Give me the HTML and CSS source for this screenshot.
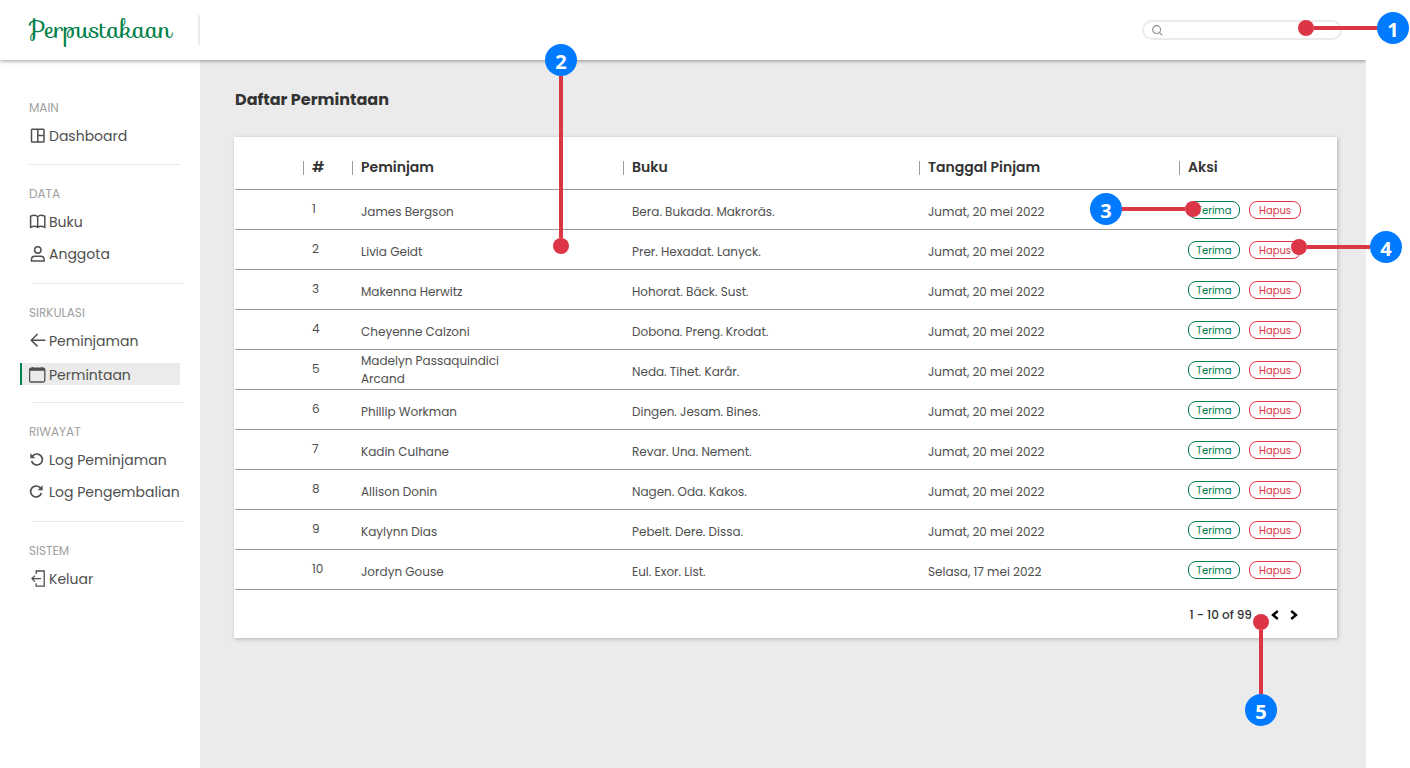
FILE: index.html
```html
<!DOCTYPE html>
<html lang="id">
<head>
<meta charset="utf-8">
<title>Perpustakaan</title>
<link rel="stylesheet" href="styles.css">
</head>
<body>
<div class="app">
  <header class="topbar">
    <a class="brand" href="#">Perpustakaan</a>
    <label class="search">
      <svg class="search-icon" viewBox="0 0 12 12" aria-hidden="true"><circle cx="5" cy="5" r="4.3"/><path d="M8.2 8.2 11.3 11.3"/></svg>
      <input class="search-input" type="text" aria-label="Cari">
    </label>
  </header>
  <div class="body">
    <nav class="sidebar">
      <section class="group first">
        <h2 class="group-title">MAIN</h2>
        <a class="item" href="#"><svg class="icon" viewBox="0 0 18 18"><rect class="medium" x="2.500" y="2.200" width="12.500" height="12.800" rx="0.800"/><path class="medium" d="M8.800 2.200v12.800M8.800 8.400h6.200"/></svg>Dashboard</a>
      </section>
      <section class="group">
        <h2 class="group-title">DATA</h2>
        <a class="item" href="#"><svg class="icon" viewBox="0 0 18 18"><path class="medium" d="M8.700 3.700C7.200 2.300 4 2.200 1.600 3.300v11C4 13.300 7.200 13.200 8.700 14.300 10.200 13.200 13.400 13.300 15.800 14.300v-11C13.400 2.200 10.200 2.300 8.700 3.700zV14.300"/></svg>Buku</a>
        <a class="item" href="#"><svg class="icon" viewBox="0 0 18 18"><circle class="medium" cx="8.800" cy="5" r="3.200"/><path class="medium" d="M2.500 16v-1.400c0-2 1.300-3.300 3.300-3.300h6c2 0 3.300 1.300 3.300 3.300V16z"/></svg>Anggota</a>
      </section>
      <section class="group">
        <h2 class="group-title">SIRKULASI</h2>
        <a class="item" href="#"><svg class="icon" viewBox="0 0 18 18"><path class="medium" d="M16.500 8.200H2.500M8.500 2 2.300 8.200l6.200 6.200"/></svg>Peminjaman</a>
        <a class="item active" href="#" aria-current="page"><svg class="icon" viewBox="0 0 18 18"><rect x="0.600" y="2.200" width="15.200" height="13.800" rx="1.500"/><path d="M3.500 1v2M12.800 1v2"/><path class="solid" d="M.6 2h15.200v2.800H.6z"/></svg>Permintaan</a>
      </section>
      <section class="group">
        <h2 class="group-title">RIWAYAT</h2>
        <a class="item" href="#"><svg class="icon" viewBox="0 0 18 18"><path class="thick" d="M3.400 5.300A5.500 5.500 0 1 1 2.600 10"/><path class="solid" d="M1.300 2.200v5h5z"/></svg>Log Peminjaman</a>
        <a class="item" href="#"><svg class="icon" viewBox="0 0 18 18"><path class="thick" d="M11.600 5.300A5.500 5.500 0 1 0 12.400 10"/><path class="solid" d="M13.700 2.200v5h-5z"/></svg>Log Pengembalian</a>
      </section>
      <section class="group last">
        <h2 class="group-title">SISTEM</h2>
        <a class="item" href="#"><svg class="icon" viewBox="0 0 18 18"><path d="M7.200 4V1h8v15.200h-8v-3M12 8.600H3M6 5.600 3 8.600l3 3"/></svg>Keluar</a>
      </section>
    </nav>
    <main class="content">
      <h1 class="page-title">Daftar Permintaan</h1>
      <div class="card">
        <table class="requests">
          <colgroup><col class="c-gap"><col class="c-no"><col class="c-name"><col class="c-book"><col class="c-date"><col></colgroup>
          <thead><tr><td></td><th scope="col"><span class="tick">#</span></th><th scope="col"><span class="tick">Peminjam</span></th><th scope="col"><span class="tick">Buku</span></th><th scope="col"><span class="tick">Tanggal Pinjam</span></th><th scope="col"><span class="tick">Aksi</span></th></tr></thead>
          <tbody>
            <tr><td></td><td class="no">1</td><td><div class="name">James Bergson</div></td><td>Bera. Bukada. Makroräs.</td><td>Jumat, 20 mei 2022</td><td class="act"><div class="actions"><button class="btn accept">Terima</button><button class="btn remove">Hapus</button></div></td></tr>
            <tr><td></td><td class="no">2</td><td><div class="name">Livia Geidt</div></td><td>Prer. Hexadat. Lanyck.</td><td>Jumat, 20 mei 2022</td><td class="act"><div class="actions"><button class="btn accept">Terima</button><button class="btn remove">Hapus</button></div></td></tr>
            <tr><td></td><td class="no">3</td><td><div class="name">Makenna Herwitz</div></td><td>Hohorat. Bäck. Sust.</td><td>Jumat, 20 mei 2022</td><td class="act"><div class="actions"><button class="btn accept">Terima</button><button class="btn remove">Hapus</button></div></td></tr>
            <tr><td></td><td class="no">4</td><td><div class="name">Cheyenne Calzoni</div></td><td>Dobona. Preng. Krodat.</td><td>Jumat, 20 mei 2022</td><td class="act"><div class="actions"><button class="btn accept">Terima</button><button class="btn remove">Hapus</button></div></td></tr>
            <tr><td></td><td class="no">5</td><td class="two-line"><div class="name">Madelyn Passaquindici Arcand</div></td><td>Neda. Tihet. Karår.</td><td>Jumat, 20 mei 2022</td><td class="act"><div class="actions"><button class="btn accept">Terima</button><button class="btn remove">Hapus</button></div></td></tr>
            <tr><td></td><td class="no">6</td><td><div class="name">Phillip Workman</div></td><td>Dingen. Jesam. Bines.</td><td>Jumat, 20 mei 2022</td><td class="act"><div class="actions"><button class="btn accept">Terima</button><button class="btn remove">Hapus</button></div></td></tr>
            <tr><td></td><td class="no">7</td><td><div class="name">Kadin Culhane</div></td><td>Revar. Una. Nement.</td><td>Jumat, 20 mei 2022</td><td class="act"><div class="actions"><button class="btn accept">Terima</button><button class="btn remove">Hapus</button></div></td></tr>
            <tr><td></td><td class="no">8</td><td><div class="name">Allison Donin</div></td><td>Nagen. Oda. Kakos.</td><td>Jumat, 20 mei 2022</td><td class="act"><div class="actions"><button class="btn accept">Terima</button><button class="btn remove">Hapus</button></div></td></tr>
            <tr><td></td><td class="no">9</td><td><div class="name">Kaylynn Dias</div></td><td>Pebelt. Dere. Dissa.</td><td>Jumat, 20 mei 2022</td><td class="act"><div class="actions"><button class="btn accept">Terima</button><button class="btn remove">Hapus</button></div></td></tr>
            <tr><td></td><td class="no">10</td><td><div class="name">Jordyn Gouse</div></td><td>Eul. Exor. List.</td><td>Selasa, 17 mei 2022</td><td class="act"><div class="actions"><button class="btn accept">Terima</button><button class="btn remove">Hapus</button></div></td></tr>
          </tbody>
        </table>
        <footer class="pager">
          <span class="range">1 - 10 of 99</span>
          <button class="page-btn" aria-label="Sebelumnya"><svg class="chevron" viewBox="0 0 8 10"><path d="M6.800 1 2 5l4.800 4"/></svg></button>
          <button class="page-btn" aria-label="Berikutnya"><svg class="chevron" viewBox="0 0 8 10"><path d="M1.200 1 6 5 1.200 9"/></svg></button>
        </footer>
      </div>
    </main>
  </div>
</div>
<div class="callouts">
  <div class="callout to-left one"><i class="dot"></i><i class="lead"></i><b class="badge">1</b></div>
  <div class="callout to-bottom two"><i class="dot"></i><i class="lead"></i><b class="badge">2</b></div>
  <div class="callout to-right three"><i class="dot"></i><i class="lead"></i><b class="badge">3</b></div>
  <div class="callout to-left four"><i class="dot"></i><i class="lead"></i><b class="badge">4</b></div>
  <div class="callout to-top five"><i class="dot"></i><i class="lead"></i><b class="badge">5</b></div>
</div>
</body>
</html>
```
FILE: styles.css
```css
* { box-sizing: border-box; }
body {
  margin: 0;
  position: relative;
  background: #fff;
  color: #4f4f4f;
  font-family: Poppins, Inter, "Liberation Sans", sans-serif;
  font-size: 12px;
}
button, input { font-family: inherit; }
.app {
  display: flex;
  flex-direction: column;
  min-height: 100vh;
  margin-right: 44px;
}
.topbar {
  display: flex;
  align-items: center;
  justify-content: space-between;
  height: 60px;
  padding: 0 24px 0 0;
  background: #fff;
  box-shadow: 0 1px 4px rgba(0, 0, 0, 0.4);
  clip-path: inset(0 0 -8px 0);
  z-index: 1;
}
.brand {
  width: 200px;
  height: 30px;
  padding-left: 29px;
  border-right: 2px solid #ebebeb;
  color: #00804a;
  font-family: "Sofia", "Liberation Serif", serif;
  font-size: 24px;
  line-height: 30px;
  text-decoration: none;
}
.search {
  display: flex;
  align-items: center;
  gap: 6px;
  width: 200px;
  height: 20px;
  padding: 0 8px;
  border: 2px solid #ebebeb;
  border-radius: 10px;
}
.search-icon {
  flex: none;
  width: 11px;
  height: 11px;
  fill: none;
  stroke: #8c8c8c;
  stroke-width: 1.2;
}
.search-input {
  flex: 1;
  min-width: 0;
  padding: 0;
  border: 0;
  outline: 0;
  background: none;
  font-size: 11px;
}
.body { display: flex; flex: 1; }
.sidebar {
  flex: none;
  width: 200px;
  padding: 38px 16px 0 20px;
}
.group {
  display: flex;
  flex-direction: column;
  gap: 10px;
  margin-bottom: 19px;
}
.group::after {
  content: "";
  height: 1px;
  margin: 8px 0 0 13px;
  background: #e6e6e6;
}
.first::after { margin: 7px 4px 0 9px; }
.last::after { display: none; }
.group-title {
  margin: 0 0 -3px 9px;
  color: #a0a0a0;
  font-size: 12px;
  font-weight: 400;
  line-height: 20px;
}
.item {
  display: flex;
  align-items: center;
  gap: 2px;
  height: 22px;
  margin-right: 4px;
  padding-left: 7px;
  border-left: 2px solid transparent;
  color: #4f4f4f;
  font-size: 14px;
  text-decoration: none;
  white-space: nowrap;
}
.active {
  margin-top: 1px;
  margin-bottom: -1px;
  padding-top: 2px;
  border-color: #00804a;
  background: #ebebeb;
}
.icon {
  flex: none;
  width: 18px;
  height: 18px;
  fill: none;
  stroke: #4f4f4f;
  stroke-width: 1.3;
}
.medium { stroke-width: 1.5; }
.thick { stroke-width: 1.7; }
.solid { fill: #4f4f4f; stroke: none; }
.content {
  flex: 1;
  padding: 28px 29px 28px 34px;
  background: #ebebeb;
}
.page-title {
  margin: 0 0 25px 1px;
  color: #333;
  font-size: 16px;
  font-weight: 700;
  line-height: 24px;
}
.card {
  padding-left: 1px;
  background: #fff;
  box-shadow: 1px 1px 4px rgba(0, 0, 0, 0.25);
}
.requests {
  width: 100%;
  table-layout: fixed;
  border-collapse: separate;
  border-spacing: 0;
}
.c-gap { width: 68px; }
.c-no { width: 49px; }
.c-name { width: 271px; }
.c-book { width: 296px; }
.c-date { width: 260px; }
.requests th, .requests td {
  padding: 0 0 0 9px;
  border-bottom: 1px solid #9b9b9b;
  text-align: left;
}
.requests thead tr { height: 53px; }
.requests th {
  padding: 9px 0 0;
  color: #333;
  font-size: 14px;
  font-weight: 600;
}
.tick {
  display: block;
  height: 14px;
  padding-left: 8px;
  border-left: 1px solid #9b9b9b;
  line-height: 12px;
}
.requests tbody tr { height: 40px; }
.requests tbody td { padding-top: 4px; line-height: 18px; }
.requests tbody .no { padding: 0 0 2px 9px; }
.requests tbody .two-line { padding-top: 1px; }
.requests tbody .act { padding-top: 1px; }
.name { max-width: 160px; }
.actions { display: flex; gap: 9px; }
.btn {
  width: 52px;
  height: 18px;
  padding: 1px 0 0;
  border: 1px solid;
  border-radius: 8px;
  background: none;
  font-size: 10px;
  line-height: 16px;
}
.accept { color: #00804a; }
.remove { color: #dc3545; }
.pager {
  display: flex;
  align-items: center;
  justify-content: flex-end;
  gap: 11px;
  height: 48px;
  padding: 2px 39px 0 0;
  color: #333;
}
.range { margin-right: 8px; font-weight: 500; }
.page-btn {
  display: flex;
  padding: 0;
  border: 0;
  background: none;
}
.chevron {
  width: 8px;
  height: 10px;
  fill: none;
  stroke: #000;
  stroke-width: 2.4;
}

/* Numbered callouts over the page */
.callout {
  position: absolute;
  z-index: 2;
  display: flex;
  align-items: center;
}
.to-left, .to-right { height: 32px; }
.to-right { flex-direction: row-reverse; }
.to-top { flex-direction: column; width: 32px; }
.to-bottom { flex-direction: column-reverse; width: 32px; }
.dot {
  flex: none;
  width: 16px;
  height: 16px;
  border-radius: 50%;
  background: #dc3545;
}
.lead { flex: 1; background: #dc3545; }
.to-left .lead, .to-right .lead { height: 4px; }
.to-top .lead, .to-bottom .lead { width: 4px; }
.badge {
  flex: none;
  width: 32px;
  height: 32px;
  border-radius: 50%;
  background: #007bff;
  color: #fff;
  font-family: "Noto Sans", sans-serif;
  font-size: 20px;
  line-height: 36px;
  text-align: center;
}
.one { left: 1298px; top: 12px; width: 111px; }
.two { left: 545px; top: 44px; height: 210px; }
.three { left: 1090px; top: 193px; width: 111px; }
.four { left: 1291px; top: 231px; width: 111px; }
.five { left: 1245px; top: 614px; height: 112px; }
```
